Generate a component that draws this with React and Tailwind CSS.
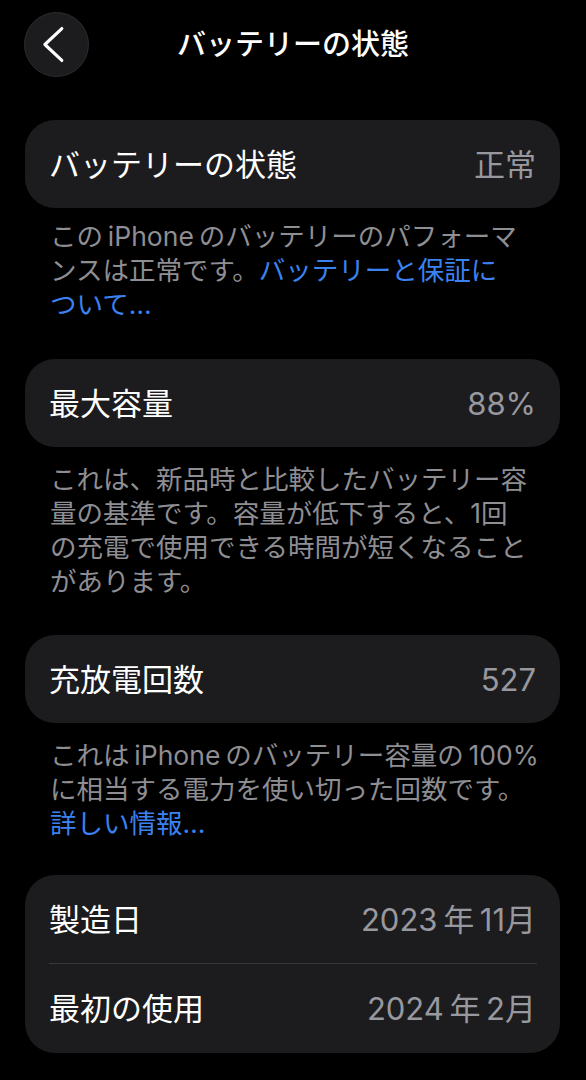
import React from "react";

const FONT = { fontFamily: '"Inter", "Noto Sans CJK JP", sans-serif' };

function Card({ label, value }) {
  return (
    <div className="flex h-[88px] items-center justify-between rounded-[30px] bg-[#1c1c1e] pl-[24px] pr-[24px]">
      <span className="text-[31px] leading-none text-white">{label}</span>
      <span className="text-[31px] leading-none text-[#98989f]">{value}</span>
    </div>
  );
}

function Desc({ className, children }) {
  return (
    <p className={"whitespace-nowrap pl-[25px] text-[26.5px] leading-[34px] text-[#8e8e93] " + className}>
      {children}
    </p>
  );
}

export default function App() {
  return (
    <div className="min-h-screen bg-black pb-[27px]" style={FONT}>
      {/* header */}
      <div className="grid grid-cols-[1fr_auto_1fr] items-center pt-[12px]">
        <div className="pl-[24px]">
          <button className="flex h-[65px] w-[65px] items-center justify-center rounded-full border border-[#2c2c2e] bg-[#1c1c1e]">
            <svg width="65" height="65" viewBox="0 0 65 65" fill="none">
              <path d="M38 16 L20.5 32.5 L38 49" stroke="white" strokeWidth="3.2" strokeLinecap="round" strokeLinejoin="round" />
            </svg>
          </button>
        </div>
        <h1 className="text-[29px] font-medium leading-none text-white">バッテリーの状態</h1>
        <div />
      </div>

      <div className="pl-[25px] pr-[26px]">
        <div className="mt-[43px]">
          <Card label="バッテリーの状態" value="正常" />
        </div>
        <Desc className="mt-[11px]">
          この{"\u2009"}iPhone{"\u2009"}のバッテリーのパフォーマ
          <br />
          ンスは正常です。<span className="text-[#3b82f0]">バッテリーと保証に</span>
          <br />
          <span className="text-[#3b82f0]">ついて…</span>
        </Desc>

        <div className="mt-[38px]">
          <Card label="最大容量" value="88%" />
        </div>
        <Desc className="mt-[15px]">
          これは、新品時と比較したバッテリー容
          <br />
          量の基準です。容量が低下すると、1回
          <br />
          の充電で使用できる時間が短くなること
          <br />
          があります。
        </Desc>

        <div className="mt-[37px]">
          <Card label="充放電回数" value="527" />
        </div>
        <Desc className="mt-[15px]">
          これは{"\u2009"}iPhone{"\u2009"}のバッテリー容量の{"\u2009"}100%
          <br />
          に相当する電力を使い切った回数です。
          <br />
          <span className="text-[#3b82f0]">詳しい情報…</span>
        </Desc>

        <div className="mt-[35px] rounded-[30px] bg-[#1c1c1e] pl-[24px]">
          <div className="flex h-[88px] items-center justify-between pr-[24px]">
            <span className="text-[31px] leading-none text-white">製造日</span>
            <span className="text-[31px] leading-none text-[#98989f]">2023{"\u2009"}年{"\u2009"}11月</span>
          </div>
          <div className="mr-[23px] h-px bg-[#38383a]" />
          <div className="flex h-[89px] items-center justify-between pr-[24px]">
            <span className="text-[31px] leading-none text-white">最初の使用</span>
            <span className="text-[31px] leading-none text-[#98989f]">2024{"\u2009"}年{"\u2009"}2月</span>
          </div>
        </div>
      </div>
    </div>
  );
}
